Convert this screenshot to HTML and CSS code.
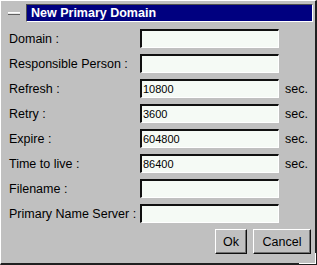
FILE: index.html
```html
<!DOCTYPE html>
<html lang="en">
<head>
    <meta charset="UTF-8">
    <title>New Primary Domain</title>
    <link rel="stylesheet" href="styles.css">
</head>
<body>
    <div class="window">
        <div class="titlebar">
            <span class="menu-btn"></span>
            <div class="title">New Primary Domain</div>
        </div>

        <form class="fields">
            <label for="domain">Domain :</label>
            <input type="text" id="domain">
            <span></span>

            <label for="person">Responsible Person :</label>
            <input type="text" id="person">
            <span></span>

            <label for="refresh">Refresh :</label>
            <input type="text" id="refresh" value="10800">
            <span class="unit">sec.</span>

            <label for="retry">Retry :</label>
            <input type="text" id="retry" value="3600">
            <span class="unit">sec.</span>

            <label for="expire">Expire :</label>
            <input type="text" id="expire" value="604800">
            <span class="unit">sec.</span>

            <label for="ttl">Time to live :</label>
            <input type="text" id="ttl" value="86400">
            <span class="unit">sec.</span>

            <label for="filename">Filename :</label>
            <input type="text" id="filename">
            <span></span>

            <label for="server">Primary Name Server :</label>
            <input type="text" id="server">
            <span></span>
        </form>

        <div class="buttons">
            <button type="button" class="btn btn-ok">Ok</button>
            <button type="button" class="btn btn-cancel">Cancel</button>
        </div>

        <span class="grip"></span>
    </div>
</body>
</html>
```

FILE: styles.css
```css
body {
    margin: 0;
    background: #c0c0c0;
}

.window {
    position: relative;
    width: 317px;
    height: 265px;
    box-sizing: border-box;
    background: #c0c0c0;
    border-top: 1px solid #ffffff;
    border-left: 1px solid #ffffff;
    border-right: 2px solid #202020;
    border-bottom: 2px solid #202020;
    font-family: "Liberation Sans", Arial, sans-serif;
    font-size: 12.5px;
    color: #000;
}

.titlebar {
    display: flex;
    align-items: center;
    gap: 6px;
    padding: 3px 0 0 7px;
}

.menu-btn {
    display: block;
    width: 12px;
    height: 1px;
    border-top: 1px solid #ffffff;
    border-bottom: 1px solid #606060;
    background: #e8e8e8;
}

.title {
    width: 287px;
    height: 18px;
    line-height: 16px;
    box-sizing: border-box;
    padding-left: 4px;
    background: #000080;
    border-top: 1px solid #505050;
    border-left: 1px solid #505050;
    border-right: 1px solid #ffffff;
    border-bottom: 1px solid #ffffff;
    color: #ffffff;
    font-weight: bold;
}

.fields {
    display: grid;
    grid-template-columns: 131px 139px auto;
    grid-auto-rows: 19px;
    row-gap: 6px;
    align-items: center;
    margin: 7px 0 0;
    padding-left: 8px;
}

.fields label {
    white-space: nowrap;
}

.fields input {
    width: 139px;
    height: 19px;
    box-sizing: border-box;
    margin: 0;
    padding: 0 1px;
    background: #f5faf5;
    border-top: 2px solid #101010;
    border-left: 2px solid #101010;
    border-right: 1px solid #ffffff;
    border-bottom: 1px solid #ffffff;
    font-family: "Liberation Sans", Arial, sans-serif;
    font-size: 11px;
    color: #000;
    outline: none;
}

.unit {
    padding-left: 6px;
}

.buttons {
    display: flex;
    justify-content: flex-end;
    gap: 6px;
    margin-top: 6px;
    padding-right: 4px;
}

.btn {
    height: 25px;
    box-sizing: border-box;
    margin: 0;
    padding: 0;
    background: #c0c0c0;
    border-top: 1px solid #ffffff;
    border-left: 1px solid #ffffff;
    border-right: 1px solid #101010;
    border-bottom: 1px solid #101010;
    box-shadow: inset -1px -1px 0 #707070;
    font-family: "Liberation Sans", Arial, sans-serif;
    font-size: 12.5px;
    color: #000;
}

.btn-ok {
    width: 32px;
}

.btn-cancel {
    width: 58px;
}

/* coin de redimensionnement */
.grip {
    position: absolute;
    right: -1px;
    bottom: -1px;
    width: 16px;
    height: 10px;
    border-right: 1px solid #ffffff;
    border-bottom: 1px solid #ffffff;
}
```
